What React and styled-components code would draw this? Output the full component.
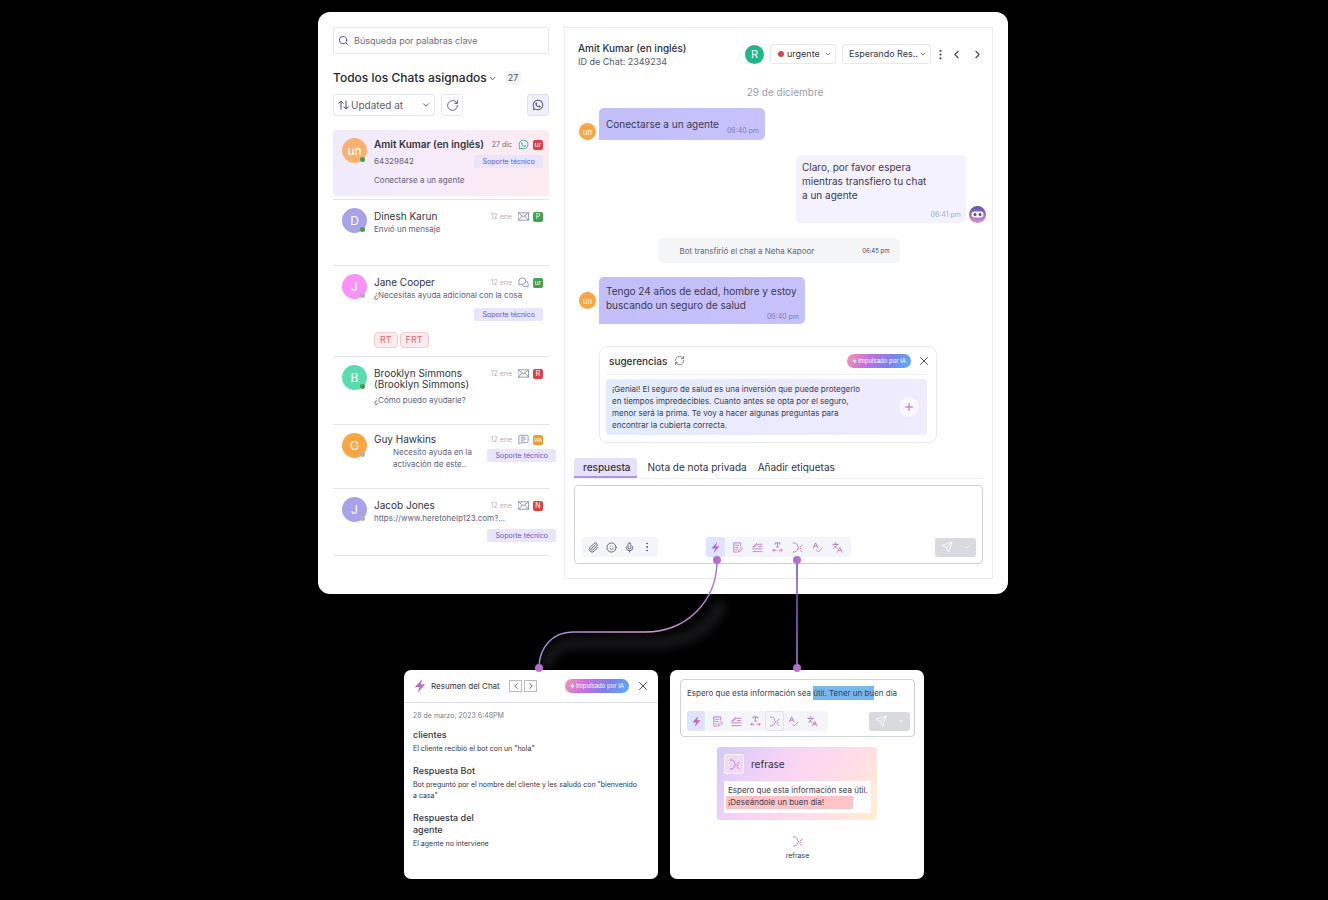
import React from 'react';
import styled, { createGlobalStyle } from 'styled-components';
import {
  Search, ChevronDown, ChevronLeft, ChevronRight, RotateCw, RefreshCw,
  MoreVertical, X, Plus, Paperclip, Smile, Mic,
  MessageSquareText, Languages, Send
} from 'lucide-react';
import { FaWhatsapp } from 'react-icons/fa';


const GlobalStyle = createGlobalStyle`
* { box-sizing: border-box; }

body {
  margin: 0;
  background: #000;
  color: #3f4150;
  font-family: Inter, "Liberation Sans", sans-serif;
  font-size: 9px;
  line-height: 12px;
}

button, select, input, textarea {
  font: inherit;
  color: inherit;
  margin: 0;
  padding: 0;
  border: 0;
  background: none;
}

h1, h2, h3, p, ul { margin: 0; padding: 0; font-weight: 400; }
ul { list-style: none; }
svg { display: block; flex: none; }
`

const Page = styled.main`
  min-height: 100vh;
  padding: 12px 2px 20px 0;
`

const Stage = styled.div`
  position: relative;
  max-width: 690px;
  margin: 0 auto;
`

const Window = styled.div`
  display: grid;
  grid-template-columns: 216px 1fr;
  gap: 15px;
  padding: 15px;
  background: #fff;
  border-radius: 12px;
`

/* ---------- sidebar ---------- */

const SearchBox = styled.label`
  display: flex;
  align-items: center;
  gap: 5px;
  height: 27px;
  padding: 0 4px;
  border: 1px solid #e6e8ee;
  border-radius: 2px;
  color: #50536a;

  input { flex: 1; min-width: 0; outline: none; }
  input::placeholder { color: #6b6e80; opacity: 1; }
`

const ListTitle = styled.div`
  display: flex;
  align-items: center;
  gap: 8px;
  margin-top: 16px;
  height: 16px;

  button {
    display: flex;
    align-items: center;
    gap: 1px;
    font-size: 12px;
    font-weight: 500;
    color: #26272f;
  }
`

const Count = styled.span`
  padding: 1px 3px;
  border-radius: 4px;
  background: #f3f3fa;
  color: #4b4d60;
`

const Filters = styled.div`
  display: flex;
  gap: 6px;
  margin-top: 8px;

  > :last-child { margin-left: auto; }
`

const Picker = styled.div`
  display: flex;
  align-items: center;
  gap: ${p => p.$gap || 1}px;
  height: ${p => p.$height || 22}px;
  width: ${p => p.$width}px;
  padding: 0 3px 0 ${p => p.$pad || 4}px;
  border: 1px solid #e8e9f0;
  border-radius: 3px;

  select {
    flex: 1;
    min-width: 0;
    appearance: none;
    outline: none;
    font-size: ${p => p.$size || 9}px;
    color: ${p => p.$tone || '#33343f'};
  }
`

const SquareButton = styled.button`
  display: grid;
  place-items: center;
  width: 22px;
  height: 22px;
  border: 1px solid ${p => (p.$on ? '#dfe0f5' : '#e8e9f0')};
  border-radius: 3px;
  background: ${p => (p.$on ? '#eff0fc' : '#fff')};
  color: #4b4d68;
`

const List = styled.ul`
  margin-top: 14px;
`

const Item = styled.li`
  display: flex;
  gap: 7px;
  height: ${p => p.$height}px;
  padding: 7px 6px 0 9px;
  border-bottom: 1px solid #e4e5ea;

  ${p => p.$active && `
    margin-bottom: 3px;
    border-bottom: 0;
    border-radius: 4px;
    background: linear-gradient(100deg, #eeebfd 0%, #f7ebfa 50%, #ffebf0 100%);

    + li { border-top: 1px solid #e4e5ea; }
  `}
`

const Avatar = styled.span`
  position: relative;
  display: grid;
  place-items: center;
  flex: none;
  width: ${p => p.$size || 25}px;
  height: ${p => p.$size || 25}px;
  margin-top: ${p => p.$top || 0}px;
  border-radius: 50%;
  background: ${p => p.$bg};
  color: #fff;
  font-size: ${p => p.$text || 12}px;
`

const Presence = styled.i`
  position: absolute;
  right: 2px;
  bottom: 1px;
  width: 5px;
  height: 5px;
  border-radius: 50%;
  background: ${p => (p.$online ? '#43a04b' : '#b0afb8')};
`

const ItemBody = styled.div`
  flex: 1;
  min-width: 0;
  display: flex;
  flex-direction: column;
  padding-top: ${p => (p.$compact ? 0 : 2)}px;
`

const TopLine = styled.div`
  display: flex;
  padding: 2px 0 1px;
`

const Name = styled.h3`
  flex: 1;
  white-space: pre;
  font-size: 10px;
  line-height: 11px;
  font-weight: ${p => (p.$bold ? 600 : 400)};
  color: #33343f;
`

const Meta = styled.div`
  display: flex;
  align-items: center;
  gap: 4px;
  height: 11px;

  time {
    margin-right: 2px;
    font-size: 7px;
    color: ${p => (p.$dark ? '#6b6e80' : '#b0b2bc')};
  }
`

const Priority = styled.span`
  width: 10px;
  height: 10px;
  overflow: hidden;
  border-radius: 2px;
  background: ${p => p.$bg};
  color: #fff;
  font-size: ${p => (p.$small ? 5 : 7)}px;
  line-height: 10px;
  text-align: center;
`

const Preview = styled.p`
  margin-top: ${p => p.$top || 0}px;
  padding-left: ${p => (p.$indent ? 19 : 0)}px;
  white-space: pre;
  font-size: 8px;
  color: #5f6278;
`

const Split = styled.div`
  display: flex;
  justify-content: space-between;
`

const Tag = styled.span`
  align-self: flex-end;
  flex: none;
  height: 13px;
  margin-top: ${p => p.$top || 0}px;
  margin-right: ${p => (p.$over ? -13 : 0)}px;
  padding: 0 8px;
  border-radius: 2px;
  background: #e8e5fd;
  color: #6658cf;
  font-size: 7px;
  line-height: 13px;
`

const Chips = styled.div`
  display: flex;
  gap: 2px;
  margin-top: 11px;

  span {
    padding: 0 5px;
    border: 1px solid #f9c9cb;
    border-radius: 4px;
    background: #fdeced;
    color: #e0686c;
    line-height: 14px;
  }
`

/* ---------- conversation ---------- */

const Panel = styled.section`
  padding: 12px 9px 14px;
  border: 1px solid #ececf1;
  min-width: 0;
`

const Header = styled.header`
  display: flex;
  justify-content: space-between;
  align-items: center;
  height: 28px;
  margin-right: -2px;
  padding-left: 4px;

  h2 { font-size: 10px; line-height: 14px; font-weight: 500; color: #2f303b; }
  p { font-size: 9px; line-height: 13px; color: #555869; }
`

const Controls = styled.div`
  display: flex;
  align-items: center;
  gap: 6px;
  height: 27px;
`

const IconButton = styled.button`
  display: flex;
  align-items: center;
  justify-content: center;
  width: ${p => p.$width || 15}px;
  height: 15px;
  color: #44465a;
`

const Dot = styled.i`
  width: 6px;
  height: 6px;
  border-radius: 50%;
  background: #d9434e;
`

const Day = styled.div`
  margin-top: 16px;
  padding-left: 13px;
  text-align: center;
  font-size: 10px;
  line-height: 16px;
  color: #9a9ca6;
`

const Message = styled.div`
  display: flex;
  align-items: ${p => p.$align || 'flex-end'};
  justify-content: ${p => (p.$mine ? 'flex-end' : 'flex-start')};
  gap: 3px;
  margin-top: ${p => p.$top}px;
  margin-right: ${p => (p.$mine ? -3 : 0)}px;
  padding-left: 5px;
`

const Bubble = styled.div`
  display: flex;
  flex-direction: ${p => (p.$row ? 'row' : 'column')};
  justify-content: space-between;
  width: ${p => p.$width}px;
  min-height: ${p => p.$height}px;
  padding: ${p => (p.$mine ? '5px 5px 3px 6px' : '7px 6px 2px 7px')};
  border-radius: ${p => (p.$mine ? '5px' : '5px 5px 5px 0')};
  background: ${p => (p.$mine ? '#f4f2fe' : 'linear-gradient(90deg, #c1bef9, #c7c2fb)')};

  p {
    white-space: pre;
    font-size: 10px;
    line-height: ${p => (p.$row ? 18 : 14)}px;
    color: #3a3950;
  }

  time {
    align-self: flex-end;
    font-size: 7px;
    line-height: 10px;
    margin-bottom: ${p => (p.$row ? 2 : 0)}px;
    color: ${p => (p.$mine ? '#a9a8bd' : '#7f7bb0')};
  }
`

const Notice = styled.div`
  display: flex;
  align-items: center;
  justify-content: space-between;
  width: 242px;
  height: 25px;
  margin: 15px auto 0;
  padding: 0 10px 0 22px;
  border-radius: 5px;
  background: #f3f5f7;
  font-size: 8px;
  color: #62657a;

  time { font-size: 6px; color: #44465a; }
`

const Suggestions = styled.section`
  width: 338px;
  margin: 22px 0 0 25px;
  padding: 0 9px 7px 6px;
  border: 1px solid #e9e9f1;
  border-radius: 8px;
`

const Pill = styled.span`
  display: flex;
  align-items: center;
  justify-content: center;
  gap: 1px;
  height: 14px;
  width: 64px;
  border-radius: 7px;
  background: linear-gradient(120deg, #f995ae 0%, #c96fe0 32%, #7b80f0 65%, #5bb0f3 100%);
  color: #fff;
  font-size: 6px;
  white-space: nowrap;
`

const SuggestHead = styled.header`
  display: flex;
  align-items: center;
  height: 28px;
  margin-bottom: 4px;
  padding-left: 3px;
  border-bottom: 1px solid #f1f1f5;

  h3 { margin-right: 7px; font-size: 10px; font-weight: 500; color: #2f303b; }
  > ${Pill} { margin: 0 5px 0 auto; }
  > ${IconButton} { margin-right: -4px; }
`

const Suggestion = styled.div`
  display: flex;
  align-items: center;
  justify-content: space-between;
  padding: 4px 8px 4px 6px;
  border-radius: 4px;
  background: linear-gradient(100deg, #e0edfe, #ebeafd 50%, #efecfd);

  p { white-space: pre; font-size: 8px; color: #3a3c52; }

  button {
    display: grid;
    place-items: center;
    width: 20px;
    height: 20px;
    border-radius: 50%;
    background: #f9f6fe;
  }
`

const Tabs = styled.div`
  display: flex;
  gap: 11px;
  margin-top: 15px;
  border-bottom: 1px solid #f0f0f4;
`

const Tab = styled.button`
  height: 20px;
  padding: ${p => (p.$on ? '0 6px 0 9px' : '0')};
  border-bottom: 2px solid ${p => (p.$on ? '#a79ae0' : 'transparent')};
  border-radius: 3px 3px 0 0;
  background: ${p => (p.$on ? '#e6e1fb' : 'none')};
  font-size: 10px;
  font-weight: ${p => (p.$on ? 500 : 400)};
  color: #33343f;
`

const Tools = styled.div`
  display: flex;
  align-items: center;

  > :last-child { margin-left: auto; }
`

const Composer = styled.div`
  margin-top: ${p => p.$top || 0}px;
  padding: ${p => p.$pad};
  border: 1px solid #cfd2da;
  border-radius: 4px;

  textarea {
    display: block;
    width: 100%;
    height: 45px;
    resize: none;
    outline: none;
  }
`

const ToolButton = styled.button`
  display: grid;
  place-items: center;
  width: 18px;
  height: 20px;
  border-radius: 3px;
  border: 1px solid ${p => (p.$boxed ? '#e2e4ee' : 'transparent')};
  color: #5a5d70;
`

const Bar = styled.div`
  display: flex;
  align-items: center;
  height: 20px;
  padding: 0 2px;
  border-radius: 4px;
  background: #f3f5f8;
`

const AiBar = styled(Bar)`
  margin-left: ${p => (p.$boxed ? 0 : 48)}px;
  padding: 0 ${p => (p.$boxed ? 6 : 4)}px 0 0;

  > ${ToolButton} { width: ${p => (p.$boxed ? 19 : 20)}px; }

  > ${ToolButton}:first-child {
    width: ${p => (p.$boxed ? 18 : 19)}px;
    margin-right: ${p => (p.$boxed ? 3 : 2)}px;
    background: linear-gradient(90deg, #dbe8fc, #e4defa);
  }
`

const SendButton = styled.button`
  display: flex;
  align-items: center;
  justify-content: space-between;
  flex: none;
  width: 41px;
  height: 19px;
  padding: 0 5px 0 6px;
  border-radius: 3px;
  background: #d8dade;
  color: #fff;
`

/* ---------- lower cards ---------- */

const Connectors = styled.svg`
  position: absolute;
  left: 0;
  top: 0;
  overflow: visible;
  pointer-events: none;
`

const Cards = styled.div`
  display: grid;
  grid-template-columns: 254px 254px;
  justify-content: center;
  gap: 12px;
  margin-top: 76px;
  padding-left: 2px;
`

const Card = styled.section`
  min-height: 209px;
  background: #fff;
  border-radius: 7px;
`

const SummaryHead = styled.header`
  display: flex;
  align-items: center;
  height: 33px;
  padding: 0 8px 0 9px;
  border-bottom: 1px solid #dfe0e6;

  h2 { flex: 1; margin-left: 4px; font-size: 8px; color: #2f303b; }
  > ${Pill} { margin: 0 6px 0 28px; }
`

const Pager = styled.div`
  display: flex;
  gap: 2px;

  button {
    display: flex;
    align-items: center;
    justify-content: center;
    width: 13px;
    height: 12px;
    border: 1px solid #b9bac2;
  }
`

const Summary = styled.div`
  padding: 7px 9px 0;
  font-size: 7px;
  color: #33343f;

  time { display: block; color: #777a88; }
  h3 { margin: 7px 0 2px; font-size: 9px; font-weight: 500; }
  p { line-height: 11px; margin-bottom: 11px; white-space: pre-line; }
`

const Rephrase = styled(Card)`
  padding: 9px 9px 15px 10px;
`

const Draft = styled.div`
  margin-bottom: 11px;
  white-space: nowrap;
  outline: none;
  color: #3f4150;
  font-size: 8px;
  line-height: 14px;

  mark { display: inline-block; background: #78b6ee; color: inherit; }
`

const Proposal = styled.div`
  width: 160px;
  margin: 10px 0 16px 37px;
  padding: 7px 6px 7px 7px;
  border-radius: 3px;
  background: linear-gradient(125deg, #d3c9fc 0%, #f7d3f6 35%, #ffdde6 70%, #fff0cf 100%);

  header { display: flex; align-items: center; gap: 7px; margin-bottom: 7px; }
  h3 { font-size: 10px; color: #2f303b; }
`

const IconTile = styled.span`
  display: grid;
  place-items: center;
  width: 20px;
  height: 20px;
  border: 1px solid #fff;
  border-radius: 3px;
  background: #f0d9fa;
`

const ProposalText = styled.p`
  padding: 3px 0 4px 4px;
  background: #fffdfe;
  font-size: 8px;
  white-space: nowrap;

  mark {
    display: block;
    width: 127px;
    margin-left: -2px;
    padding-left: 2px;
    background: #fdc3c6;
    color: inherit;
    line-height: 13px;
  }
`

const Legend = styled.div`
  display: flex;
  flex-direction: column;
  align-items: center;
  gap: 3px;
  font-size: 7px;
  color: #33343f;
`

/* ---------- icons ---------- */

const AI = 'url(#aiTint)';

const Glyph = ({ size = 11, stroke = AI, children }) => (
  <svg width={size} height={size} viewBox="0 0 24 24" fill="none" stroke={stroke}
    strokeWidth="1.8" strokeLinecap="round" strokeLinejoin="round" aria-hidden="true">
    {children}
  </svg>
);

const Bolt = ({ size = 11 }) => (
  <svg width={size} height={size} viewBox="0 0 24 24" aria-hidden="true">
    <path d="M16 0 3 14h8L8 24 21 9h-8z" fill={AI} />
  </svg>
);

const NoteIcon = () => (
  <Glyph>
    <path d="M19 9V2H4v20h7M8 7h7M8 12h5M14 21l1-4 5-5 3 3-5 5zM8 17h3" />
  </Glyph>
);

const LinesIcon = () => (
  <Glyph>
    <path d="M3 10 10 3l2 2-7 6H2M14 5h8M14 10h8M2 15h20M2 21h20" />
  </Glyph>
);

const WidthIcon = () => (
  <Glyph>
    <path d="M7 5V2h10v3M12 2v9M10 11h4M2 18h7M5 15l-3 3 3 3M15 18h7M19 15l3 3-3 3" />
  </Glyph>
);

const RephraseIcon = () => (
  <Glyph>
    <path d="M3 2c7 0 10 4 9 8l3 3-3 2c0 4-3 7-9 7" />
    <path d="M17 11l5-4M18 14h2M17 17l5 4" />
  </Glyph>
);

const SpellIcon = () => (
  <Glyph>
    <path d="M3 13 8 2l5 11M5 9h6M10 18l4 4 8-9" />
  </Glyph>
);

const MailIcon = () => (
  <Glyph stroke="#7d86ad">
    <path d="M1 4h22v16H1zM1 4l11 9L23 4M1 20l8-9M23 20l-8-9" />
  </Glyph>
);

const ChatsIcon = () => (
  <Glyph stroke="#7d86ad">
    <path d="M2 16V9a7 7 0 0 1 7-7h1a7 7 0 0 1 0 14z" />
    <path d="M17 8.500a6 6 0 0 1 5 6V21h-7a6 6 0 0 1-5-3" />
  </Glyph>
);

const Swap = () => (
  <svg width="11" height="10" viewBox="0 0 22 20" fill="none" stroke="#4b4d60" strokeWidth="2" aria-hidden="true">
    <path d="M6 19V2M1 7l5-5 5 5M16 1v17M11 13l5 5 5-5" />
  </svg>
);

const BotFace = () => (
  <svg width="17" height="17" viewBox="0 0 34 34" role="img" aria-label="bot">
    <defs>
      <linearGradient id="botTint" x1="0" y1="0" x2="0" y2="1">
        <stop offset="0" stopColor="#5a56b8" />
        <stop offset="1" stopColor="#dc8ccb" />
      </linearGradient>
    </defs>
    <circle cx="17" cy="17" r="17" fill="url(#botTint)" />
    <rect x="5" y="11" width="24" height="12" rx="6" fill="#fff" />
    <circle cx="12" cy="17" r="3" fill="#5048a8" />
    <circle cx="22" cy="17" r="3" fill="#5048a8" />
  </svg>
);

const CHANNELS = {
  whatsapp: <FaWhatsapp size={11} color="#2fb98a" />,
  mail: <MailIcon />,
  chat: <ChatsIcon />,
  sms: <MessageSquareText size={11} strokeWidth={1.8} color="#7d86ad" />
};

const AiTools = ({ boxed }) => (
  <AiBar $boxed={boxed}>
    <ToolButton aria-label="Resumen"><Bolt /></ToolButton>
    <ToolButton aria-label="Nota"><NoteIcon /></ToolButton>
    <ToolButton aria-label="Tono"><LinesIcon /></ToolButton>
    <ToolButton aria-label="Longitud"><WidthIcon /></ToolButton>
    <ToolButton $boxed={boxed} aria-label="Refrase"><RephraseIcon /></ToolButton>
    <ToolButton aria-label="Ortografía"><SpellIcon /></ToolButton>
    <ToolButton aria-label="Traducir"><Languages size={11} color={AI} /></ToolButton>
  </AiBar>
);

const AiSend = () => (
  <SendButton aria-label="Enviar">
    <Send size={12} strokeWidth={1.6} />
    <ChevronDown size={8} />
  </SendButton>
);

const Powered = () => (
  <Pill>
    <svg width="5" height="6" viewBox="0 0 10 12" fill="#fff" aria-hidden="true">
      <path d="M5 0l1.500 4.500L10 6 6.500 7.500 5 12 3.500 7.500 0 6l3.500-1.500z" />
    </svg>
    Impulsado por IA
  </Pill>
);

const ChatItem = props => {
  const { name, initial, bg, online, date, channel, badge, badgeBg, active, compact, height, children } = props;

  return (
    <Item $active={active} $height={height}>
      <Avatar $bg={bg} $top={1}>
        {initial}
        <Presence $online={online} />
      </Avatar>
      <ItemBody $compact={compact}>
        <TopLine>
          <Name $bold={active}>{name}</Name>
          <Meta $dark={active}>
            <time>{date}</time>
            {CHANNELS[channel]}
            <Priority $bg={badgeBg} $small={badge === 'WA'}>{badge}</Priority>
          </Meta>
        </TopLine>
        {children}
      </ItemBody>
    </Item>
  );
};

const Sidebar = () => (
  <aside>
    <SearchBox>
      <Search size={11} aria-hidden="true" />
      <input type="search" aria-label="Buscar" placeholder="Búsqueda por palabras clave" />
    </SearchBox>
    <ListTitle>
      <button>Todos los Chats asignados <ChevronDown size={9} /></button>
      <Count>27</Count>
    </ListTitle>
    <Filters>
      <Picker $width={102} $size={10} $tone="#5c5f72" $gap={2}>
        <Swap />
        <select aria-label="Ordenar"><option>Updated at</option></select>
        <ChevronDown size={10} />
      </Picker>
      <SquareButton aria-label="Actualizar"><RotateCw size={13} strokeWidth={1.6} /></SquareButton>
      <SquareButton $on aria-label="WhatsApp"><FaWhatsapp size={12} /></SquareButton>
    </Filters>
    <List>
      <ChatItem active compact height={66} name="Amit Kumar (en inglés)" initial="un" bg="#fdb170" online
        date="27 dic" channel="whatsapp" badge="ur" badgeBg="#de3f44">
        <Split>
          <Preview $top={4}>64329842</Preview>
          <Tag $top={4}>Soporte técnico</Tag>
        </Split>
        <Preview $top={6}>Conectarse a un agente</Preview>
      </ChatItem>
      <ChatItem height={67} name="Dinesh Karun" initial="D" bg="#a8a2e8" online
        date="12 ene" channel="mail" badge="P" badgeBg="#43a04b">
        <Preview>Envió un mensaje</Preview>
      </ChatItem>
      <ChatItem height={91} name="Jane Cooper" initial="J" bg="#fb92f7"
        date="12 ene" channel="chat" badge="ur" badgeBg="#43a04b">
        <Preview>¿Necesitas ayuda adicional con la cosa</Preview>
        <Tag $top={7}>Soporte técnico</Tag>
        <Chips><span>RT</span><span>FRT</span></Chips>
      </ChatItem>
      <ChatItem height={68} name={'Brooklyn Simmons\n(Brooklyn Simmons)'} initial="B" bg="#5bdcb0" online
        date="12 ene" channel="mail" badge="R" badgeBg="#de3f44">
        <Preview $top={3}>¿Cómo puedo ayudarle?</Preview>
      </ChatItem>
      <ChatItem compact height={64} name="Guy Hawkins" initial="G" bg="#fba545"
        date="12 ene" channel="sms" badge="WA" badgeBg="#f59b2f">
        <Split>
          <Preview $indent>{'Necesito ayuda en la\nactivación de este..'}</Preview>
          <div><Tag as="div" $over $top={3}>Soporte técnico</Tag></div>
        </Split>
      </ChatItem>
      <ChatItem height={67} name="Jacob Jones" initial="J" bg="#a8a2e8"
        date="12 ene" channel="mail" badge="N" badgeBg="#de3f44">
        <Preview>https://www.heretohelp123.com?...</Preview>
        <Tag $over $top={5}>Soporte técnico</Tag>
      </ChatItem>
    </List>
  </aside>
);

const SUGGESTION = `¡Genial! El seguro de salud es una inversión que puede protegerlo
en tiempos impredecibles. Cuanto antes se opta por el seguro,
menor será la prima. Te voy a hacer algunas preguntas para
encontrar la cubierta correcta.`;

const Conversation = () => (
  <Panel>
    <Header>
      <div>
        <h2>Amit Kumar (en inglés)</h2>
        <p>ID de Chat: 2349234</p>
      </div>
      <Controls>
        <Avatar $size={19} $bg="#22b58c" $text={11}>R</Avatar>
        <Picker $width={66} $height={20} $pad={7} $gap={3}>
          <Dot />
          <select aria-label="Prioridad"><option>urgente</option></select>
          <ChevronDown size={8} />
        </Picker>
        <Picker $width={89} $height={20} $pad={6}>
          <select aria-label="Estado"><option>Esperando Res..</option></select>
          <ChevronDown size={8} />
        </Picker>
        <IconButton $width={6} aria-label="Más"><MoreVertical size={13} /></IconButton>
        <IconButton aria-label="Anterior"><ChevronLeft size={13} /></IconButton>
        <IconButton aria-label="Siguiente"><ChevronRight size={13} /></IconButton>
      </Controls>
    </Header>
    <Day>29 de diciembre</Day>
    <Message $top={8}>
      <Avatar $size={17} $bg="#fba545" $text={8}>un</Avatar>
      <Bubble $row $width={166} $height={32}>
        <p>Conectarse a un agente</p>
        <time>06:40 pm</time>
      </Bubble>
    </Message>
    <Message $mine $top={15}>
      <Bubble $mine $width={170} $height={68}>
        <p>{'Claro, por favor espera\nmientras transfiero tu chat\na un agente'}</p>
        <time>06:41 pm</time>
      </Bubble>
      <BotFace />
    </Message>
    <Notice>
      <span>Bot transfirió el chat a Neha Kapoor</span>
      <time>06:45 pm</time>
    </Notice>
    <Message $top={14} $align="center">
      <Avatar $size={17} $bg="#fba545" $text={8}>un</Avatar>
      <Bubble $width={206} $height={47}>
        <p>{'Tengo 24 años de edad, hombre y estoy\nbuscando un seguro de salud'}</p>
        <time>06:40 pm</time>
      </Bubble>
    </Message>
    <Suggestions>
      <SuggestHead>
        <h3>sugerencias</h3>
        <RefreshCw size={11} strokeWidth={1.8} color="#6a62c4" />
        <Powered />
        <IconButton aria-label="Cerrar"><X size={14} strokeWidth={1.6} /></IconButton>
      </SuggestHead>
      <Suggestion>
        <p>{SUGGESTION}</p>
        <button aria-label="Insertar"><Plus size={12} color="#b45fc4" /></button>
      </Suggestion>
    </Suggestions>
    <Tabs>
      <Tab $on>respuesta</Tab>
      <Tab>Nota de nota privada</Tab>
      <Tab>Añadir etiquetas</Tab>
    </Tabs>
    <Composer $top={6} $pad="6px 6px 6px 7px">
      <textarea aria-label="Respuesta" />
      <Tools>
        <Bar>
          <ToolButton aria-label="Adjuntar"><Paperclip size={11} /></ToolButton>
          <ToolButton aria-label="Emoji"><Smile size={11} /></ToolButton>
          <ToolButton aria-label="Audio"><Mic size={11} /></ToolButton>
          <ToolButton aria-label="Más"><MoreVertical size={12} /></ToolButton>
        </Bar>
        <AiTools />
        <AiSend />
      </Tools>
    </Composer>
  </Panel>
);

const SummaryCard = () => (
  <Card>
    <SummaryHead>
      <Bolt size={14} />
      <h2>Resumen del Chat</h2>
      <Pager>
        <button aria-label="Anterior"><ChevronLeft size={10} /></button>
        <button aria-label="Siguiente"><ChevronRight size={10} /></button>
      </Pager>
      <Powered />
      <IconButton aria-label="Cerrar"><X size={14} strokeWidth={1.6} /></IconButton>
    </SummaryHead>
    <Summary>
      <time>28 de marzo, 2023 6:48PM</time>
      <h3>clientes</h3>
      <p>El cliente recibió el bot con un "hola"</p>
      <h3>Respuesta Bot</h3>
      <p>{'Bot preguntó por el nombre del cliente y les saludó con "bienvenido\na casa"'}</p>
      <h3>Respuesta del<br />agente</h3>
      <p>El agente no interviene</p>
    </Summary>
  </Card>
);

const RephraseCard = () => (
  <Rephrase>
    <Composer $pad="6px 4px 5px 6px">
      <Draft role="textbox" aria-label="Borrador" contentEditable suppressContentEditableWarning>
        Espero que esta información sea <mark>útil. Tener un bu</mark>en día
      </Draft>
      <Tools>
        <AiTools boxed />
        <AiSend />
      </Tools>
    </Composer>
    <Proposal>
      <header>
        <IconTile><RephraseIcon /></IconTile>
        <h3>refrase</h3>
      </header>
      <ProposalText>
        Espero que esta información sea útil.
        <mark>¡Deseándole un buen día!</mark>
      </ProposalText>
    </Proposal>
    <Legend>
      <RephraseIcon />
      refrase
    </Legend>
  </Rephrase>
);

const KNOBS = [[399, 548], [479, 548], [221, 656], [479, 656]];

const App = () => {
  return (
    <Page>
      <GlobalStyle />
      <Stage>
        <Window>
          <Sidebar />
          <Conversation />
        </Window>
        <Cards>
          <SummaryCard />
          <RephraseCard />
        </Cards>
        <Connectors width="690" height="670" viewBox="0 0 690 670" aria-hidden="true">
          <defs>
            <linearGradient id="aiTint" gradientUnits="userSpaceOnUse" x1="2" y1="2" x2="22" y2="22">
              <stop offset="0" stopColor="#9468cc" />
              <stop offset="1" stopColor="#e070bf" />
            </linearGradient>
            <linearGradient id="curve" gradientUnits="userSpaceOnUse" x1="221" y1="600" x2="400" y2="600">
              <stop offset="0" stopColor="#9d88d0" />
              <stop offset="0.600" stopColor="#d79ad0" />
              <stop offset="1" stopColor="#a77ad0" />
            </linearGradient>
            <linearGradient id="drop" gradientUnits="userSpaceOnUse" x1="0" y1="548" x2="0" y2="656">
              <stop offset="0" stopColor="#5b45b0" />
              <stop offset="1" stopColor="#b98ad8" />
            </linearGradient>
            <linearGradient id="knob" x1="0" y1="0" x2="1" y2="1">
              <stop offset="0" stopColor="#9d6fd0" />
              <stop offset="1" stopColor="#d66cc0" />
            </linearGradient>
            <filter id="soft" x="-20%" y="-20%" width="140%" height="140%">
              <feGaussianBlur stdDeviation="5" />
            </filter>
          </defs>
          <path d="M404 590C394 616 370 631 330 631H262C242 631 230 640 227 656" fill="none"
            stroke="#9a9ab8" strokeOpacity="0.150" strokeWidth="12" filter="url(#soft)" />
          <path d="M399 548C399 590 368 620 327 620H255C234 620 221 636 221 656" fill="none"
            stroke="url(#curve)" strokeWidth="1.500" />
          <path d="M479 548V656" fill="none" stroke="url(#drop)" strokeWidth="1.500" />
          {KNOBS.map(([x, y]) => (
            <circle key={`${x}-${y}`} cx={x} cy={y} r="4" fill="url(#knob)" />
          ))}
        </Connectors>
      </Stage>
    </Page>
  );
};

export default App;
